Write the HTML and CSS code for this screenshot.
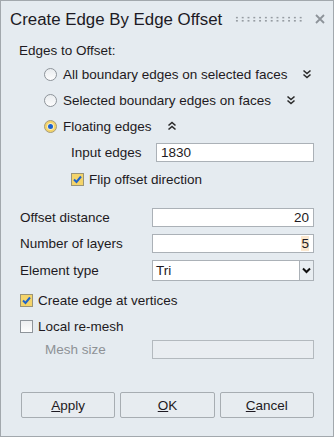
FILE: index.html
```html
<!DOCTYPE html>
<html>
<head>
<meta charset="utf-8">
<link rel="stylesheet" href="styles.css">
</head>
<body>
<div class="win">
  <div class="titlebar">
    <span class="title">Create Edge By Edge Offset</span>
    <span class="grip"></span>
    <svg class="close" width="10" height="10" viewBox="0 0 10 10"><path d="M1 1L9 9M9 1L1 9" stroke="#8d9399" stroke-width="1.8" fill="none"/></svg>
  </div>
  <div class="content">
    <div class="heading">Edges to Offset:</div>
    <div class="radio-row">
      <span class="radio"></span><span class="lbl">All boundary edges on selected faces</span>
      <svg class="chev" width="10" height="10" viewBox="0 0 10 10"><path d="M1.5 1.5L5 4.5L8.5 1.5M1.5 5.5L5 8.5L8.5 5.5" stroke="#2a2a2a" stroke-width="1.6" fill="none"/></svg>
    </div>
    <div class="radio-row">
      <span class="radio"></span><span class="lbl">Selected boundary edges on faces</span>
      <svg class="chev" width="10" height="10" viewBox="0 0 10 10"><path d="M1.5 1.5L5 4.5L8.5 1.5M1.5 5.5L5 8.5L8.5 5.5" stroke="#2a2a2a" stroke-width="1.6" fill="none"/></svg>
    </div>
    <div class="radio-row">
      <span class="radio on"><span class="dot"></span></span><span class="lbl">Floating edges</span>
      <svg class="chev" width="10" height="10" viewBox="0 0 10 10"><path d="M1.5 4.5L5 1.5L8.5 4.5M1.5 8.5L5 5.5L8.5 8.5" stroke="#2a2a2a" stroke-width="1.6" fill="none"/></svg>
    </div>
    <div class="sub-row input-edges">
      <span class="sub-lbl">Input edges</span>
      <span class="field sub-field">1830</span>
    </div>
    <div class="check-row flip">
      <span class="check on"><svg width="11" height="11" viewBox="0 0 11 11"><path d="M2 5.5L4.5 8L9 2.5" stroke="#1f63c9" stroke-width="2" fill="none"/></svg></span>
      <span class="lbl">Flip offset direction</span>
    </div>
    <div class="form-row offset">
      <span class="form-lbl">Offset distance</span>
      <span class="field num">20</span>
    </div>
    <div class="form-row gap7">
      <span class="form-lbl">Number of layers</span>
      <span class="field num"><span class="sel">5</span></span>
    </div>
    <div class="form-row gap7 select-row">
      <span class="form-lbl">Element type</span>
      <span class="select"><span class="sel-text">Tri</span><span class="sel-btn"><svg width="9" height="7" viewBox="0 0 9 7"><path d="M1 1.5L4.5 5L8 1.5" stroke="#111" stroke-width="2" fill="none"/></svg></span></span>
    </div>
    <div class="check-row create">
      <span class="check on"><svg width="11" height="11" viewBox="0 0 11 11"><path d="M2 5.5L4.5 8L9 2.5" stroke="#1f63c9" stroke-width="2" fill="none"/></svg></span>
      <span class="lbl">Create edge at vertices</span>
    </div>
    <div class="check-row local">
      <span class="check"></span>
      <span class="lbl">Local re-mesh</span>
    </div>
    <div class="form-row mesh">
      <span class="form-lbl mesh-lbl">Mesh size</span>
      <span class="field disabled"></span>
    </div>
    <div class="buttons">
      <span class="btn"><u>A</u>pply</span>
      <span class="btn"><u>O</u>K</span>
      <span class="btn"><u>C</u>ancel</span>
    </div>
  </div>
</div>
</body>
</html>
```
FILE: styles.css
```css
* { box-sizing: border-box; }
html, body { margin: 0; padding: 0; }
body {
  width: 334px;
  height: 437px;
  font-family: "Liberation Sans", Arial, sans-serif;
  font-size: 13.5px;
  color: #1e1a22;
  background: #e5ebf0;
}
.win {
  width: 334px;
  height: 437px;
  border: 1px solid #a2a8ad;
  background: #e5ebf0;
  overflow: hidden;
}
.titlebar {
  height: 36px;
  display: flex;
  align-items: center;
  padding-left: 9px;
}
.title {
  font-size: 16.85px;
  color: #1c1a24;
  margin-top: 1px;
}
.grip {
  margin-left: 12px;
  width: 70px;
  height: 6px;
  background-image: radial-gradient(circle, #979da3 0.95px, transparent 1.15px);
  background-size: 5.8px 3.2px;
}
.close {
  margin-left: 11px;
  margin-top: -1px;
}
.content {
  padding: 0 19px 0 18px;
  display: flex;
  flex-direction: column;
}
.heading {
  height: 20px;
  line-height: 20px;
  margin-top: 4px;
}
.radio-row {
  height: 26px;
  display: flex;
  align-items: center;
  padding-left: 25px;
}
.radio {
  width: 13px;
  height: 13px;
  border-radius: 50%;
  border: 1px solid #8e949a;
  background: linear-gradient(#e9ecef, #fdfdfd);
  display: flex;
  align-items: center;
  justify-content: center;
  flex: none;
}
.radio.on {
  border-color: #a59c7e;
  background: #f4d46a;
}
.radio .dot {
  width: 5px;
  height: 5px;
  border-radius: 50%;
  background: #1c62d0;
  box-shadow: 0 0 0 1px #f9eec4;
}
.lbl { margin-left: 6px; white-space: nowrap; flex: none; }
.chev { margin-left: 15px; flex: none; }
.sub-row {
  display: flex;
  align-items: center;
  height: 19px;
  margin-top: 4px;
  padding-left: 52px;
}
.sub-lbl { width: 85px; flex: none; }
.field {
  height: 19px;
  background: #fff;
  border: 1px solid #abb1b7;
  line-height: 17px;
  padding: 0 4px;
  flex: 1;
}
.check-row {
  display: flex;
  align-items: center;
  height: 20px;
}
.check-row .lbl { margin-left: 5px; }
.flip { margin-top: 7px; padding-left: 52px; }
.check {
  width: 13px;
  height: 13px;
  border: 1px solid #8e949a;
  background: linear-gradient(#eceef0, #fdfdfd);
  display: flex;
  align-items: center;
  justify-content: center;
  flex: none;
}
.check.on {
  border-color: #9a9478;
  background: #f4d46a;
}
.form-row {
  display: flex;
  align-items: center;
  height: 19px;
}
.form-lbl { width: 133px; padding-left: 1px; flex: none; }
.offset { margin-top: 19px; }
.gap7 { margin-top: 7px; }
.num { text-align: right; padding-right: 4px; }
.sel { background: #fbe8cf; }
.select-row { height: 21px; }
.select {
  flex: 1;
  height: 21px;
  display: flex;
  background: #fff;
  border: 1px solid #abb1b7;
}
.sel-text { flex: 1; line-height: 19px; padding-left: 3px; }
.sel-btn {
  width: 14px;
  border-left: 1px solid #abb1b7;
  background: #e9eef2;
  display: flex;
  align-items: center;
  justify-content: center;
}
.create { margin-top: 9px; padding-left: 1px; }
.local { margin-top: 6px; padding-left: 1px; }
.mesh { margin-top: 4px; }
.mesh-lbl { color: #8e9296; padding-left: 26px; }
.field.disabled {
  background: #e9edf1;
  border-color: #b3b9be;
}
.buttons {
  display: flex;
  gap: 5px;
  margin-top: 33px;
  padding-left: 2px;
}
.btn {
  width: 95px;
  height: 26px;
  border: 1px solid #a7adb2;
  border-radius: 2px;
  background: #e7ecf0;
  display: flex;
  align-items: center;
  justify-content: center;
  font-size: 13.5px;
}
```
